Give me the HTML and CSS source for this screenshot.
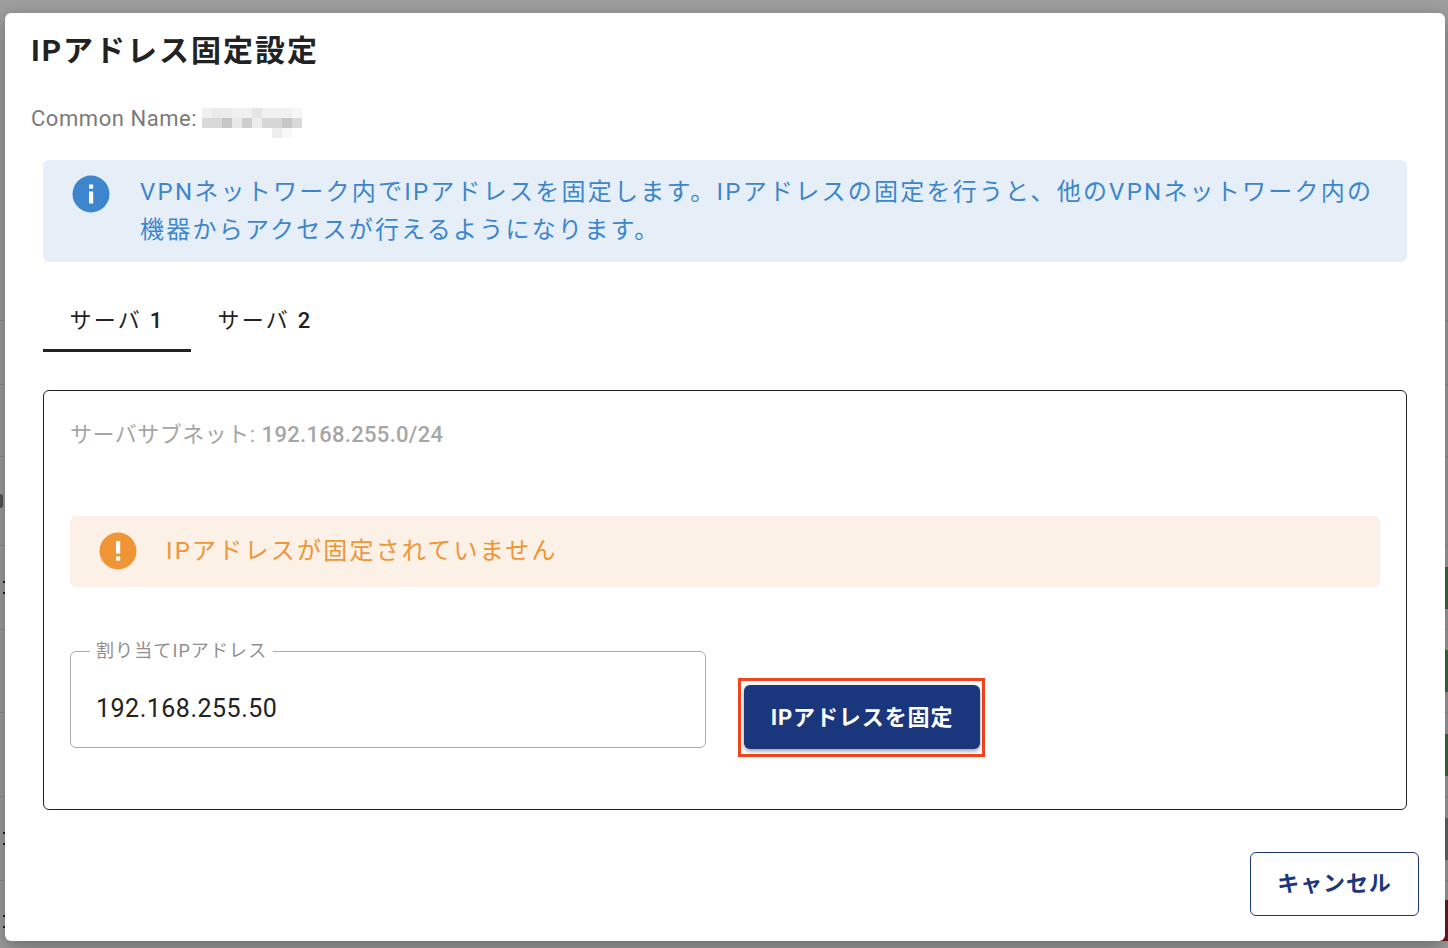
FILE: index.html
```html
<!DOCTYPE html>
<html lang="ja">
<head>
  <meta charset="UTF-8" />
  <title>IPアドレス固定設定</title>
  <link rel="stylesheet" href="styles.css">
</head>
<body>
  <div class="backdrop">
    <div class="backdrop-row row-h64"></div>
    <div class="backdrop-row row-h72"></div>
    <div class="backdrop-row row-h89"><span class="blob"></span></div>
    <div class="backdrop-row row-h84"><span class="marks"></span><span class="cell cell-green"></span></div>
    <div class="backdrop-row row-h83"><span></span><span class="cell cell-green"></span></div>
    <div class="backdrop-row row-h84"><span></span><span class="cell cell-green"></span></div>
    <div class="backdrop-row row-h84"><span class="marks"></span><span class="cell cell-dark"></span></div>
    <div class="backdrop-row row-last"><span class="marks"></span><span class="cell cell-red"></span></div>
  </div>

  <div class="dialog">
    <h1 class="dialog-title">IPアドレス固定設定</h1>

    <p class="common-name">Common Name:
      <svg class="mosaic" width="100" height="30" viewBox="0 0 100 30">
        <rect x="0" y="0" width="100" height="10" fill="#f0f0f0"/>
        <rect x="10" y="0" width="20" height="10" fill="#ebebeb"/>
        <rect x="50" y="0" width="10" height="10" fill="#e4e4e4"/>
        <rect x="90" y="0" width="10" height="10" fill="#f6f6f6"/>
        <rect x="0" y="10" width="100" height="10" fill="#d9d9d9"/>
        <rect x="20" y="10" width="10" height="10" fill="#c6c6c6"/>
        <rect x="30" y="10" width="10" height="10" fill="#e8e8e8"/>
        <rect x="40" y="10" width="10" height="10" fill="#cdcdcd"/>
        <rect x="50" y="10" width="10" height="10" fill="#ececec"/>
        <rect x="60" y="10" width="20" height="10" fill="#d6d6d6"/>
        <rect x="80" y="10" width="10" height="10" fill="#c6c6c6"/>
        <rect x="70" y="20" width="10" height="10" fill="#ededed"/>
        <rect x="80" y="20" width="10" height="10" fill="#f8f8f8"/>
      </svg>
    </p>

    <div class="alert alert-info">
      <svg class="alert-icon" width="38" height="38" viewBox="0 0 38 38">
        <circle cx="19" cy="19" r="18.5" fill="#3d85cc"/>
        <rect x="17" y="9.5" width="4.2" height="4.2" fill="#fff"/>
        <rect x="17" y="16.5" width="4.2" height="12" fill="#fff"/>
      </svg>
      <p class="alert-text">VPNネットワーク内でIPアドレスを固定します。IPアドレスの固定を行うと、他のVPNネットワーク内の機器からアクセスが行えるようになります。</p>
    </div>

    <div class="tabs">
      <button class="tab tab-active">サーバ <span class="tab-num">1</span></button>
      <button class="tab">サーバ <span class="tab-num">2</span></button>
    </div>

    <div class="panel">
      <p class="subnet">サーバサブネット: <strong>192.168.255.0/24</strong></p>

      <div class="alert alert-warning">
        <svg class="alert-icon" width="38" height="38" viewBox="0 0 38 38">
          <circle cx="19" cy="19" r="18.5" fill="#ef9535"/>
          <rect x="17" y="9" width="4.2" height="12.5" fill="#fff"/>
          <rect x="17" y="24.5" width="4.2" height="4.2" fill="#fff"/>
        </svg>
        <p class="alert-text">IPアドレスが固定されていません</p>
      </div>

      <div class="assign-row">
        <fieldset class="ip-field">
          <legend>割り当てIPアドレス</legend>
          <span class="ip-value">192.168.255.50</span>
        </fieldset>
        <div class="highlight">
          <button class="btn-primary">IPアドレスを固定</button>
        </div>
      </div>
    </div>

    <div class="dialog-actions">
      <button class="btn-outline">キャンセル</button>
    </div>
  </div>
</body>
</html>
```

FILE: styles.css
```css
* {
  box-sizing: border-box;
}

html, body {
  margin: 0;
  height: 948px;
  overflow: hidden;
}

body {
  position: relative;
  font-family: Roboto, "Noto Sans CJK JP", sans-serif;
  color: #222;
  background: #9f9f9f;
}

/* page dimmed behind the dialog */
.backdrop {
  padding-top: 320px;
}

.backdrop-row {
  border-top: 1px solid #8c8c8c;
  display: flex;
  justify-content: space-between;
  align-items: center;
}

.row-h64 { height: 64px; }
.row-h72 { height: 72px; }
.row-h83 { height: 83px; }
.row-h84 { height: 84px; }
.row-h89 { height: 89px; }

.row-last {
  height: 68px;
  align-items: flex-start;
}

.blob {
  width: 3px;
  height: 14px;
  background: #555;
  border-radius: 0 7px 7px 0;
}

.marks {
  width: 2px;
  height: 13px;
  margin-left: 3px;
  border-top: 2px solid #222;
  border-bottom: 2px solid #222;
}

.row-last .marks {
  margin-top: 34px;
}

.cell {
  width: 3px;
  height: 42px;
}

.cell-green {
  background: #3d6a3d;
}

.cell-dark {
  background: #666;
}

.cell-red {
  width: 30px;
  height: 41px;
  margin-top: 19px;
  background: #6f1a1e;
}

.dialog {
  position: absolute;
  left: 5px;
  top: 13px;
  width: 1440px;
  height: 928px;
  background: #fff;
  border-radius: 6px;
  padding: 0 26px;
  box-shadow: 0 6px 20px rgba(0,0,0,0.35);
}

.dialog-title {
  margin: 0;
  padding-top: 18px;
  font-size: 30px;
  line-height: 40px;
  font-weight: 700;
  letter-spacing: 2px;
  color: #222;
}

.common-name {
  margin: 33px 0 0;
  font-size: 22px;
  line-height: 30px;
  letter-spacing: 0.55px;
  color: #7a7a7a;
  display: flex;
  align-items: flex-start;
  gap: 5px;
}

.mosaic {
  display: block;
  margin-top: 4px;
}

.alert {
  display: flex;
  border-radius: 6px;
}

.alert-text {
  margin: 0;
}

.alert-icon {
  flex: none;
}

.alert-info {
  margin: 22px 12px 0;
  height: 102px;
  padding: 13px 30px 0 29px;
  gap: 30px;
  background: #e6eff8;
  color: #3d85cc;
  font-size: 24px;
  line-height: 38px;
  letter-spacing: 2.24px;
}

.alert-info .alert-icon {
  margin-top: 2px;
}

.tabs {
  display: flex;
  margin: 26px 0 0 12px;
}

.tab {
  width: 148px;
  height: 64px;
  padding: 0 0 2px;
  border: none;
  background: none;
  font: inherit;
  font-size: 22px;
  letter-spacing: 2.2px;
  color: #222;
  border-bottom: 2px solid transparent;
}

.tab-num {
  font-weight: 500;
}

.tab-active {
  border-bottom: 3px solid #222;
}

.panel {
  margin: 38px 12px 0;
  height: 420px;
  border: 1px solid #222;
  border-radius: 6px;
  padding: 28px 26px 0;
}

.subnet {
  margin: 0;
  font-size: 22px;
  line-height: 32px;
  letter-spacing: 0.5px;
  color: #a6a6a6;
}

.subnet strong {
  font-weight: 500;
  letter-spacing: 0.3px;
}

.alert-warning {
  margin-top: 65px;
  height: 71px;
  padding: 16px 30px 0 29px;
  gap: 29px;
  background: #fcf1e6;
  color: #ef9535;
  font-size: 24px;
  line-height: 38px;
  letter-spacing: 2.22px;
}

.assign-row {
  display: flex;
  align-items: flex-start;
  margin-top: 54px;
}

.ip-field {
  margin: 0;
  width: 636px;
  height: 107px;
  padding: 0 25px;
  border: 1px solid #aaa;
  border-radius: 6px;
  color: #222;
}

.ip-field legend {
  padding: 0 6px;
  margin-left: -6px;
  font-size: 18px;
  line-height: 20px;
  letter-spacing: 1.1px;
  color: #8f8f8f;
}

.ip-value {
  display: block;
  margin-top: 30px;
  font-size: 25px;
  line-height: 36px;
  letter-spacing: 0.5px;
}

.highlight {
  margin: 37px 0 0 32px;
  padding: 4px 2px 5px 3px;
  border: 3px solid #f0451f;
}

.btn-primary {
  display: block;
  width: 236px;
  height: 64px;
  padding: 0 0 4px;
  border: none;
  border-radius: 6px;
  background: #1a367c;
  color: #fff;
  font: inherit;
  font-size: 22px;
  font-weight: 700;
  letter-spacing: 0.9px;
  box-shadow: 0 2px 4px rgba(0,0,0,0.4);
}

.dialog-actions {
  display: flex;
  justify-content: flex-end;
  margin-top: 42px;
}

.btn-outline {
  width: 169px;
  height: 64px;
  padding: 0 0 7px;
  border: 1px solid #1a367c;
  border-radius: 6px;
  background: #fff;
  color: #1a367c;
  font: inherit;
  font-size: 22px;
  font-weight: 700;
  letter-spacing: 0.9px;
}
```
